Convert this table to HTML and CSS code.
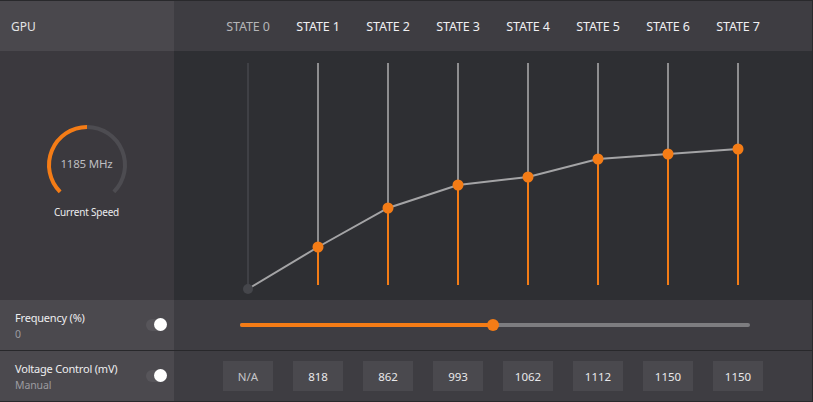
FILE: index.html
```html
<!DOCTYPE html>
<html>
<head>
<meta charset="utf-8">
<link rel="stylesheet" href="styles.css">
</head>
<body>
<div class="app">
  <div class="hd-left">GPU</div>
  <div class="hd-right">
    <div class="state dim">STATE 0</div>
    <div class="state">STATE 1</div>
    <div class="state">STATE 2</div>
    <div class="state">STATE 3</div>
    <div class="state">STATE 4</div>
    <div class="state">STATE 5</div>
    <div class="state">STATE 6</div>
    <div class="state">STATE 7</div>
  </div>

  <div class="gauge-panel">
    <div class="gauge">
      <svg class="gauge-svg" width="90" height="80" viewBox="0 0 90 80">
        <path d="M45 7 A38 38 0 0 1 71.87 71.87" fill="none" stroke="#4d4c51" stroke-width="4"/>
        <path d="M18.13 71.87 A38 38 0 0 1 45 7" fill="none" stroke="#f47c16" stroke-width="4"/>
      </svg>
      <div class="gauge-value">1185 MHz</div>
    </div>
    <div class="gauge-label">Current Speed</div>
  </div>
  <div class="chart">
    <svg width="639" height="249" viewBox="0 0 639 249">
      <line x1="74" y1="12" x2="74" y2="238" stroke="#3f4045" stroke-width="2"/>
      <g stroke="#8e8e90" stroke-width="2">
        <line x1="144" y1="12" x2="144" y2="196"/>
        <line x1="214" y1="12" x2="214" y2="157"/>
        <line x1="284" y1="12" x2="284" y2="134"/>
        <line x1="354" y1="12" x2="354" y2="126"/>
        <line x1="424" y1="12" x2="424" y2="108"/>
        <line x1="494" y1="12" x2="494" y2="103"/>
        <line x1="564" y1="12" x2="564" y2="98"/>
      </g>
      <g stroke="#f47c16" stroke-width="2">
        <line x1="144" y1="196" x2="144" y2="234"/>
        <line x1="214" y1="157" x2="214" y2="234"/>
        <line x1="284" y1="134" x2="284" y2="234"/>
        <line x1="354" y1="126" x2="354" y2="234"/>
        <line x1="424" y1="108" x2="424" y2="234"/>
        <line x1="494" y1="103" x2="494" y2="234"/>
        <line x1="564" y1="98" x2="564" y2="234"/>
      </g>
      <polyline points="74,238 144,196 214,157 284,134 354,126 424,108 494,103 564,98" fill="none" stroke="#a4a4a6" stroke-width="2"/>
      <circle cx="74" cy="238" r="5" fill="#45464b"/>
      <g fill="#f47c16">
        <circle cx="144" cy="196" r="5.5"/>
        <circle cx="214" cy="157" r="5.5"/>
        <circle cx="284" cy="134" r="5.5"/>
        <circle cx="354" cy="126" r="5.5"/>
        <circle cx="424" cy="108" r="5.5"/>
        <circle cx="494" cy="103" r="5.5"/>
        <circle cx="564" cy="98" r="5.5"/>
      </g>
    </svg>
  </div>

  <div class="row-left">
    <div class="labels">
      <div class="title">Frequency (%)</div>
      <div class="sub">0</div>
    </div>
    <div class="toggle"><div class="knob"></div></div>
  </div>
  <div class="row-right">
    <div class="slider">
      <div class="fill"></div>
      <div class="thumb"></div>
    </div>
  </div>

  <div class="row-left sep">
    <div class="labels">
      <div class="title">Voltage Control (mV)</div>
      <div class="sub">Manual</div>
    </div>
    <div class="toggle"><div class="knob"></div></div>
  </div>
  <div class="row-right sep values">
    <div class="cell"><div class="box">N/A</div></div>
    <div class="cell"><div class="box">818</div></div>
    <div class="cell"><div class="box">862</div></div>
    <div class="cell"><div class="box">993</div></div>
    <div class="cell"><div class="box">1062</div></div>
    <div class="cell"><div class="box">1112</div></div>
    <div class="cell"><div class="box">1150</div></div>
    <div class="cell"><div class="box">1150</div></div>
  </div>
</div>
</body>
</html>
```
FILE: styles.css
```css
html, body {
  margin: 0;
  padding: 0;
  background: #29292c;
}
body {
  width: 813px;
  height: 402px;
  overflow: hidden;
  font-family: "Noto Sans", "Open Sans", sans-serif;
}
.app {
  display: grid;
  grid-template-columns: 174px 638px;
  grid-template-rows: 50px 249px 50px 51px;
  margin-top: 1px;
  width: 812px;
}
.hd-left {
  background: #4a484d;
  color: #e4e4e6;
  font-size: 12px;
  display: flex;
  align-items: center;
  padding-left: 11px;
}
.hd-right {
  background: #3e3d42;
  display: flex;
  align-items: center;
  padding-left: 39px;
}
.state {
  width: 70px;
  text-align: center;
  font-size: 12.5px;
  letter-spacing: -0.1px;
  color: #f0f0f2;
}
.state.dim { color: #b5b5b8; }

.gauge-panel {
  background: #3b393e;
  display: flex;
  flex-direction: column;
  align-items: center;
  padding-top: 69px;
  padding-right: 1px;
}
.gauge {
  position: relative;
  width: 90px;
  height: 80px;
}
.gauge-svg { display: block; }
.gauge-value {
  position: absolute;
  left: 0;
  right: 0;
  top: 36px;
  text-align: center;
  font-size: 11.5px;
  letter-spacing: -0.2px;
  color: #bdbdc0;
}
.gauge-label {
  margin-top: 5px;
  font-size: 10px;
  letter-spacing: -0.2px;
  color: #ececee;
}
.chart {
  background: #2e2f33;
}
.chart svg { display: block; }

.row-left {
  background: #4b494e;
  display: flex;
  align-items: center;
  justify-content: space-between;
  padding: 0 8px 0 15px;
}
.row-right {
  background: #3e3d42;
  display: flex;
  align-items: center;
}
.sep {
  border-top: 1px solid #28282b;
}
.labels {
  display: flex;
  flex-direction: column;
  gap: 2px;
}
.title {
  font-size: 11px;
  letter-spacing: -0.2px;
  color: #eeeef0;
}
.sub {
  font-size: 10.5px;
  letter-spacing: -0.1px;
  color: #9c9ba0;
}
.toggle {
  width: 20px;
  height: 12px;
  border-radius: 6px;
  background: #57555a;
  position: relative;
}
.knob {
  position: absolute;
  right: -1px;
  top: -1px;
  width: 13px;
  height: 13px;
  border-radius: 50%;
  background: #ffffff;
}
.slider {
  position: relative;
  margin-left: 66px;
  width: 510px;
  height: 4px;
  border-radius: 2px;
  background: #7d7d80;
}
.fill {
  width: 253px;
  height: 4px;
  border-radius: 2px;
  background: #f47c16;
}
.thumb {
  position: absolute;
  left: 247px;
  top: -4px;
  width: 12px;
  height: 12px;
  border-radius: 50%;
  background: #f47c16;
}
.values {
  padding-left: 39px;
}
.cell {
  width: 70px;
  display: flex;
  justify-content: center;
}
.box {
  width: 50px;
  height: 30px;
  background: #4a494e;
  color: #e8e8ea;
  font-size: 11.5px;
  display: flex;
  align-items: center;
  justify-content: center;
}
.cell:first-child .box { color: #c4c4c7; }
```
